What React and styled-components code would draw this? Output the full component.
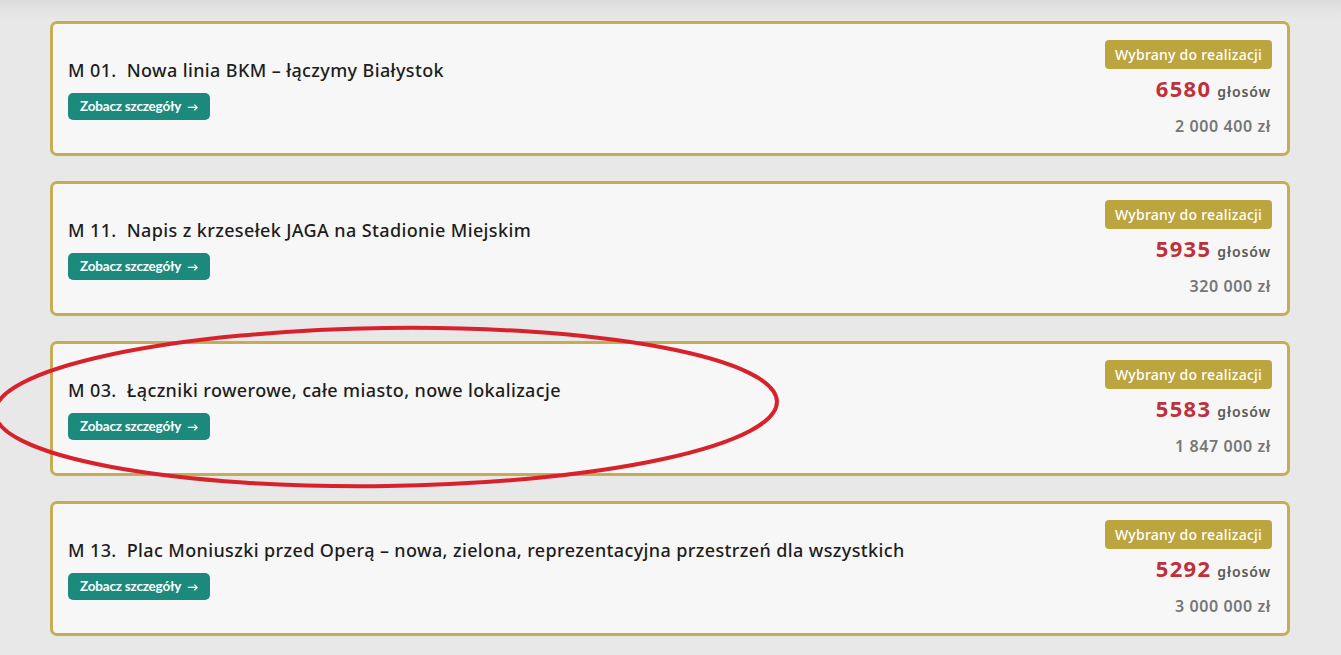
import React from "react";
import styled, { createGlobalStyle } from "styled-components";

const Global = createGlobalStyle`
  html, body { margin: 0; padding: 0; }
  body {
    background: #e8e8e8;
    font-family: "Noto Sans", "Open Sans", sans-serif;
    width: 1341px;
    height: 655px;
    overflow: hidden;
  }
`;

const Page = styled.div`
  position: relative;
  width: 1341px;
  height: 655px;
  box-sizing: border-box;
  padding: 21px 51px 0 50px;
  background: linear-gradient(#dcdcdc 0px, #e6e6e6 14px, #e8e8e8 20px);
`;

const List = styled.div`
  display: flex;
  flex-direction: column;
  gap: 25px;
`;

const Card = styled.div`
  box-sizing: border-box;
  height: 135px;
  border: 3px solid #c6ad55;
  border-radius: 7px;
  background: #f7f7f7;
  display: flex;
  align-items: stretch;
  justify-content: space-between;
  padding: 16px 15px 0 15px;
`;

const Left = styled.div`
  display: flex;
  flex-direction: column;
  justify-content: center;
  gap: 12px;
  padding-bottom: 15px;
`;

const Title = styled.div`
  font-family: "Noto Sans", sans-serif;
  font-size: 18px;
  font-weight: 500;
  color: #1d1d1d;
  white-space: pre;
  line-height: 22px;
  letter-spacing: 0.38px;
`;

const Button = styled.a`
  align-self: flex-start;
  box-sizing: border-box;
  height: 27px;
  width: 142px;
  display: flex;
  align-items: center;
  justify-content: center;
  gap: 6px;
  background: #1b8a7c;
  color: #fff;
  border-radius: 5px;
  font-family: "Lato", sans-serif;
  font-weight: 700;
  font-size: 13.5px;
  letter-spacing: -0.2px;
  text-decoration: none;
`;

const Arrow = styled.span`
  font-size: 11px;
  font-weight: 700;
`;

const Right = styled.div`
  display: flex;
  flex-direction: column;
  align-items: flex-end;
`;

const Badge = styled.div`
  box-sizing: border-box;
  height: 29px;
  width: 167px;
  background: #bca43e;
  color: #fff;
  border-radius: 4px;
  display: flex;
  align-items: center;
  justify-content: center;
  font-family: "Noto Sans", sans-serif;
  font-size: 14px;
  font-weight: 500;
  letter-spacing: 0.25px;
`;

const Votes = styled.div`
  display: flex;
  align-items: baseline;
  gap: 6px;
  margin-top: 4px;
  padding-right: 1px;
`;

const Count = styled.span`
  font-family: "Noto Sans", sans-serif;
  font-size: 22px;
  font-weight: 700;
  color: #c0303a;
  letter-spacing: 1.3px;
`;

const VotesLabel = styled.span`
  font-family: "Noto Sans", sans-serif;
  font-size: 14px;
  font-weight: 600;
  color: #5a5a5a;
  letter-spacing: 0.9px;
`;

const Price = styled.div`
  margin-top: 12px;
  padding-right: 1px;
  font-family: "Noto Sans", sans-serif;
  font-size: 16px;
  font-weight: 600;
  color: #777;
  letter-spacing: 0.6px;
`;

const Annotation = styled.svg`
  position: absolute;
  left: 0;
  top: 0;
  pointer-events: none;
`;

const projects = [
  { code: "M 01.", name: "Nowa linia BKM – łączymy Białystok", votes: 6580, cost: "2 000 400 zł" },
  { code: "M 11.", name: "Napis z krzesełek JAGA na Stadionie Miejskim", votes: 5935, cost: "320 000 zł" },
  { code: "M 03.", name: "Łączniki rowerowe, całe miasto, nowe lokalizacje", votes: 5583, cost: "1 847 000 zł" },
  { code: "M 13.", name: "Plac Moniuszki przed Operą – nowa, zielona, reprezentacyjna przestrzeń dla wszystkich", votes: 5292, cost: "3 000 000 zł" },
];

export default function App() {
  return (
    <>
      <Global />
      <Page>
        <List>
          {projects.map((p) => (
            <Card key={p.code}>
              <Left>
                <Title>{`${p.code}  ${p.name}`}</Title>
                <Button href="#">
                  Zobacz szczegóły <Arrow>→</Arrow>
                </Button>
              </Left>
              <Right>
                <Badge>Wybrany do realizacji</Badge>
                <Votes>
                  <Count>{p.votes}</Count>
                  <VotesLabel>głosów</VotesLabel>
                </Votes>
                <Price>{p.cost}</Price>
              </Right>
            </Card>
          ))}
        </List>
        <Annotation width="1341" height="655" viewBox="0 0 1341 655">
          <ellipse
            cx="386"
            cy="407"
            rx="391"
            ry="79"
            fill="none"
            stroke="#d8222b"
            strokeWidth="4"
            transform="rotate(-0.8 386 407)"
          />
        </Annotation>
      </Page>
    </>
  );
}
